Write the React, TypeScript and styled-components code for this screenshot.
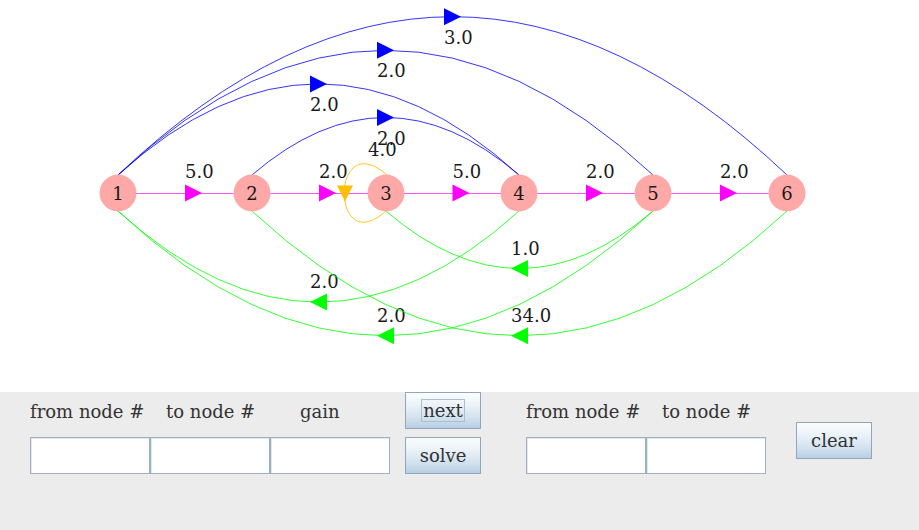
import React from "react";
import styled, { createGlobalStyle } from "styled-components";

const GlobalStyle = createGlobalStyle`
  html, body {
    margin: 0;
    padding: 0;
    background: #ffffff;
  }
  body {
    font-family: "DejaVu Serif", "Liberation Serif", serif;
  }
`;

type Dir = "right" | "left" | "down";

interface Edge {
  from: number;
  to: number;
  gain: string;
}

const NODE_X = [118, 252, 386, 519, 653, 787];
const NODE_Y = 193;
const NODE_R = 18.5;
const TOP_Y = NODE_Y - 18;
const BOTTOM_Y = NODE_Y + 18;

// chain edges between neighbours, arcs above for forward jumps, arcs below for feedback
const chain: Edge[] = [
  { from: 0, to: 1, gain: "5.0" },
  { from: 1, to: 2, gain: "2.0" },
  { from: 2, to: 3, gain: "5.0" },
  { from: 3, to: 4, gain: "2.0" },
  { from: 4, to: 5, gain: "2.0" },
];

const forward: Edge[] = [
  { from: 0, to: 3, gain: "2.0" },
  { from: 0, to: 4, gain: "2.0" },
  { from: 0, to: 5, gain: "3.0" },
  { from: 1, to: 3, gain: "2.0" },
];

const feedback: Edge[] = [
  { from: 4, to: 2, gain: "1.0" },
  { from: 3, to: 0, gain: "2.0" },
  { from: 4, to: 0, gain: "2.0" },
  { from: 5, to: 1, gain: "34.0" },
];

const bend = (span: number) => 57.5 + 33.6 * (span - 2);

function arrow(cx: number, cy: number, dir: Dir) {
  const h = 8.5;
  if (dir === "right") return `${cx - h},${cy - h} ${cx + h},${cy} ${cx - h},${cy + h}`;
  if (dir === "left") return `${cx + h},${cy - h} ${cx - h},${cy} ${cx + h},${cy + h}`;
  return `${cx - 8},${cy - 7.5} ${cx + 8},${cy - 7.5} ${cx},${cy + 8.5}`;
}

function FlowGraph() {
  return (
    <Graph width={919} height={392} viewBox="0 0 919 392">
      {chain.map((e) => {
        const x1 = NODE_X[e.from];
        const x2 = NODE_X[e.to];
        const mid = (x1 + x2) / 2;
        return (
          <g key={`c${e.from}`}>
            <line x1={x1} y1={NODE_Y + 0.5} x2={x2} y2={NODE_Y + 0.5} stroke="#ff55ff" strokeWidth={1} />
            <polygon points={arrow(mid + 8.5, NODE_Y, "right")} fill="#ff00ff" />
            <GainText x={mid} y={178}>{e.gain}</GainText>
          </g>
        );
      })}

      {forward.map((e) => {
        const x1 = NODE_X[e.from];
        const x2 = NODE_X[e.to];
        const mid = (x1 + x2) / 2;
        const b = bend(e.to - e.from);
        const apex = TOP_Y - b;
        return (
          <g key={`f${e.from}${e.to}`}>
            <path d={`M ${x1} ${TOP_Y} Q ${mid} ${TOP_Y - 2 * b} ${x2} ${TOP_Y}`} fill="none" stroke="#0000ff" strokeWidth={0.8} />
            <polygon points={arrow(mid, apex, "right")} fill="#0000ff" />
            <GainText x={mid - 8.5} y={apex + 27}>{e.gain}</GainText>
          </g>
        );
      })}

      {feedback.map((e) => {
        const x1 = NODE_X[e.from];
        const x2 = NODE_X[e.to];
        const mid = (x1 + x2) / 2;
        const b = bend(e.from - e.to);
        const apex = BOTTOM_Y + b;
        return (
          <g key={`b${e.from}${e.to}`}>
            <path d={`M ${x1} ${BOTTOM_Y} Q ${mid} ${BOTTOM_Y + 2 * b} ${x2} ${BOTTOM_Y}`} fill="none" stroke="#00ff00" strokeWidth={0.8} />
            <polygon points={arrow(mid, apex, "left")} fill="#00ff00" />
            <GainText x={mid - 8.5} y={apex - 14}>{e.gain}</GainText>
          </g>
        );
      })}

      {/* self loop on node 3 */}
      <path d="M 387 175 C 330 125, 330 261, 386 211" fill="none" stroke="#ffc000" strokeWidth={0.9} />
      <polygon points={arrow(345, 193, "down")} fill="#ffc000" />
      <GainText x={368} y={156}>4.0</GainText>

      {NODE_X.map((x, i) => (
        <g key={`n${i}`}>
          <circle cx={x} cy={NODE_Y} r={NODE_R} fill="#ffa8a8" />
          <NodeText x={x} y={200}>{i + 1}</NodeText>
        </g>
      ))}
    </Graph>
  );
}

export default function App() {
  return (
    <>
      <GlobalStyle />
      <Screen>
        <FlowGraph />
        <ControlPanel>
          <FieldGroup $cols={3}>
            <Caption $indent={0}>from node #</Caption>
            <Caption $indent={16}>to node #</Caption>
            <Caption $indent={30}>gain</Caption>
            <Field />
            <Field />
            <Field />
          </FieldGroup>
          <ButtonColumn>
            <MetalButton>
              <FocusMark>next</FocusMark>
            </MetalButton>
            <MetalButton>solve</MetalButton>
          </ButtonColumn>
          <FieldGroup $cols={2} $gapLeft={45}>
            <Caption $indent={0}>from node #</Caption>
            <Caption $indent={16}>to node #</Caption>
            <Field />
            <Field />
          </FieldGroup>
          <ClearButton>clear</ClearButton>
        </ControlPanel>
      </Screen>
    </>
  );
}

const Screen = styled.div`
  width: 919px;
  height: 530px;
  display: flex;
  flex-direction: column;
  overflow: hidden;
`;

const Graph = styled.svg`
  display: block;
  flex: none;
  background: #ffffff;
`;

const GainText = styled.text`
  font-family: "DejaVu Serif", serif;
  font-size: 18px;
  fill: #1a1a1a;
`;

const NodeText = styled.text`
  font-family: "DejaVu Serif", serif;
  font-size: 18px;
  fill: #1a1a1a;
  text-anchor: middle;
`;

const ControlPanel = styled.div`
  flex: 1;
  display: flex;
  align-items: flex-start;
  padding-left: 30px;
  background: #ececec;
`;

const FieldGroup = styled.div<{ $cols: number; $gapLeft?: number }>`
  display: grid;
  grid-template-columns: repeat(${(p) => p.$cols}, 120px);
  grid-template-rows: 37px 37px;
  row-gap: 8px;
  margin-left: ${(p) => p.$gapLeft ?? 0}px;
`;

const Caption = styled.span<{ $indent: number }>`
  align-self: center;
  padding-left: ${(p) => p.$indent}px;
  padding-top: 2px;
  font-size: 18px;
  color: #333333;
  white-space: nowrap;
`;

const Field = styled.input.attrs({ type: "text" })`
  box-sizing: border-box;
  width: 120px;
  height: 37px;
  margin: 0;
  border: 1px solid #9eafc0;
  box-shadow: inset 1px 1px 0 #e4e9ee;
  background: #ffffff;
  outline: none;
`;

const ButtonColumn = styled.div`
  display: flex;
  flex-direction: column;
  gap: 8px;
  margin-left: 15px;
`;

const MetalButton = styled.button`
  box-sizing: border-box;
  width: 76px;
  height: 37px;
  padding: 0;
  display: flex;
  align-items: center;
  justify-content: center;
  border: 1px solid #8fa6bc;
  background: linear-gradient(to bottom, #fbfdfe 0%, #eaf2f8 35%, #d3e2ef 70%, #b9cfe3 100%);
  font-family: "DejaVu Serif", serif;
  font-size: 18px;
  color: #333333;
`;

const ClearButton = styled(MetalButton)`
  margin-left: 30px;
  margin-top: 30px;
`;

const FocusMark = styled.span`
  padding: 0 1px;
  line-height: 21px;
  border: 1px solid #a9bfd4;
`;
